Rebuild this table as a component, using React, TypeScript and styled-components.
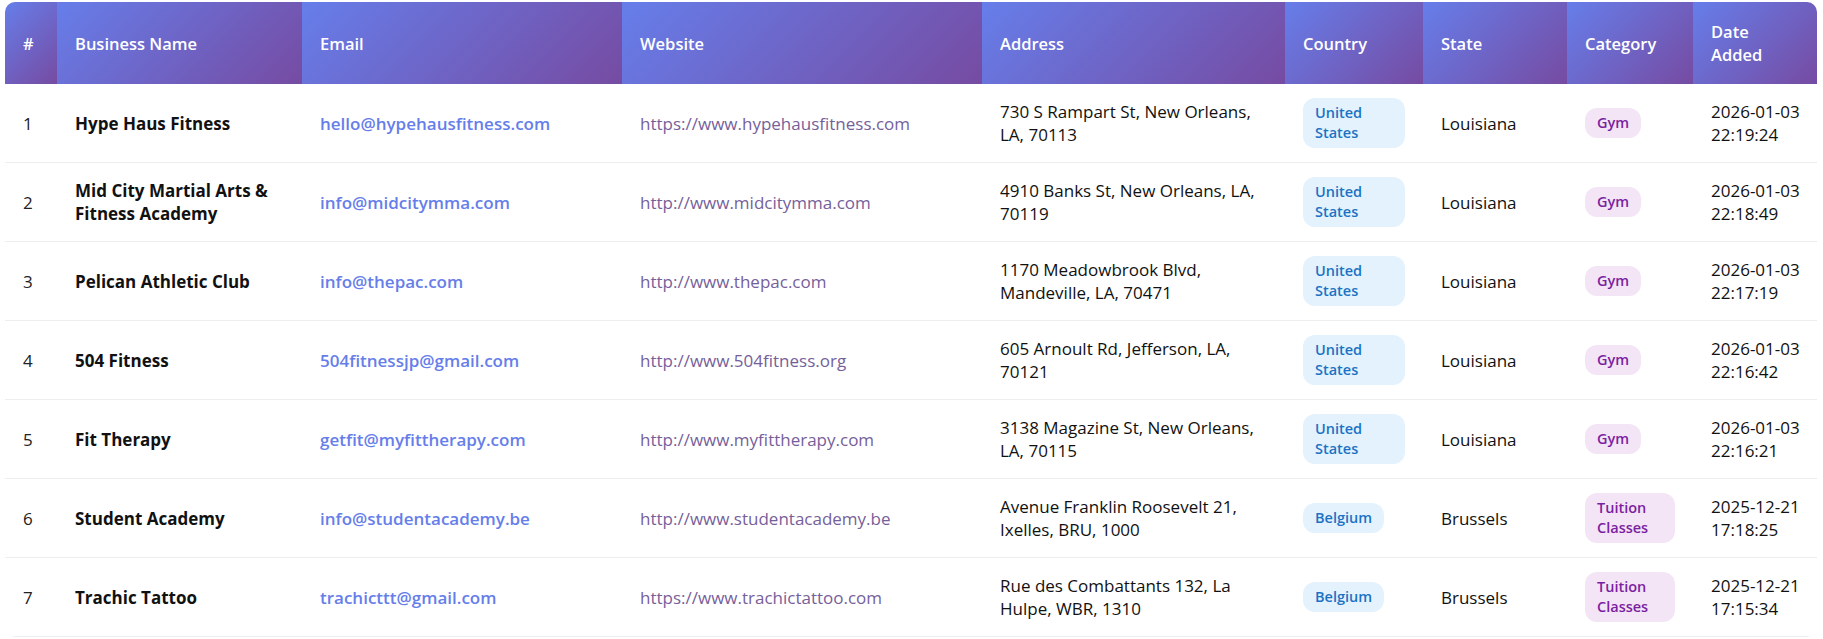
import React from "react";
import styled, { createGlobalStyle } from "styled-components";

const GlobalStyle = createGlobalStyle`
  html, body { margin: 0; padding: 0; background: #ffffff; }
  body { font-family: "Open Sans", "Noto Sans", "Liberation Sans", sans-serif; color: #222; }
`;

const Page = styled.div`
  padding: 2px 6px 0 5px;
`;

const Card = styled.div`
  border-radius: 10px;
  overflow: hidden;
  background: #fff;
`;

const Table = styled.table`
  width: 100%;
  border-collapse: collapse;
  table-layout: fixed;
  line-height: 23px;
`;

const Th = styled.th`
  background: linear-gradient(135deg, #667eea 0%, #764ba2 100%);
  color: #ffffff;
  font-size: 16.5px;
  font-weight: 600;
  text-align: left;
  padding: 18px 18px;
  vertical-align: middle;
`;

const Tr = styled.tr`
  border-bottom: 1px solid #eeeeee;
`;

const Td = styled.td<{ $tone?: "num" | "name" | "email" | "site" | "plain" }>`
  padding: 14px 18px;
  font-size: 17px;
  vertical-align: middle;
  color: ${(p) =>
    p.$tone === "email" ? "#667eea" : p.$tone === "site" ? "#76609a" : p.$tone === "num" ? "#222" : "#111"};
  font-weight: ${(p) => (p.$tone === "name" ? 700 : p.$tone === "email" ? 600 : 400)};
`;

const DateLine = styled.span`
  display: block;
  white-space: nowrap;
`;

const Badge = styled.span<{ $kind: "country" | "category" }>`
  display: inline-block;
  vertical-align: middle;
  padding: 5px 12px;
  border-radius: 12px;
  font-size: 14.5px;
  line-height: 20px;
  font-weight: 600;
  background: ${(p) => (p.$kind === "country" ? "#e3f2fd" : "#f3e5f5")};
  color: ${(p) => (p.$kind === "country" ? "#1c72c4" : "#7b1fa2")};
`;

type Row = {
  name: string;
  email: string;
  site: string;
  address: string;
  country: string;
  state: string;
  category: string;
  date: string;
  time: string;
};

const rows: Row[] = [
  { name: "Hype Haus Fitness", email: "hello@hypehausfitness.com", site: "https://www.hypehausfitness.com", address: "730 S Rampart St, New Orleans, LA, 70113", country: "United States", state: "Louisiana", category: "Gym", date: "2026-01-03", time: "22:19:24" },
  { name: "Mid City Martial Arts & Fitness Academy", email: "info@midcitymma.com", site: "http://www.midcitymma.com", address: "4910 Banks St, New Orleans, LA, 70119", country: "United States", state: "Louisiana", category: "Gym", date: "2026-01-03", time: "22:18:49" },
  { name: "Pelican Athletic Club", email: "info@thepac.com", site: "http://www.thepac.com", address: "1170 Meadowbrook Blvd, Mandeville, LA, 70471", country: "United States", state: "Louisiana", category: "Gym", date: "2026-01-03", time: "22:17:19" },
  { name: "504 Fitness", email: "504fitnessjp@gmail.com", site: "http://www.504fitness.org", address: "605 Arnoult Rd, Jefferson, LA, 70121", country: "United States", state: "Louisiana", category: "Gym", date: "2026-01-03", time: "22:16:42" },
  { name: "Fit Therapy", email: "getfit@myfittherapy.com", site: "http://www.myfittherapy.com", address: "3138 Magazine St, New Orleans, LA, 70115", country: "United States", state: "Louisiana", category: "Gym", date: "2026-01-03", time: "22:16:21" },
  { name: "Student Academy", email: "info@studentacademy.be", site: "http://www.studentacademy.be", address: "Avenue Franklin Roosevelt 21, Ixelles, BRU, 1000", country: "Belgium", state: "Brussels", category: "Tuition Classes", date: "2025-12-21", time: "17:18:25" },
  { name: "Trachic Tattoo", email: "trachicttt@gmail.com", site: "https://www.trachictattoo.com", address: "Rue des Combattants 132, La Hulpe, WBR, 1310", country: "Belgium", state: "Brussels", category: "Tuition Classes", date: "2025-12-21", time: "17:15:34" },
];

const widths = [52, 245, 320, 360, 303, 138, 144, 126, 124];
const headers = ["#", "Business Name", "Email", "Website", "Address", "Country", "State", "Category", "Date Added"];

export default function App() {
  return (
    <>
      <GlobalStyle />
      <Page>
        <Card>
          <Table>
            <colgroup>
              {widths.map((w, i) => (
                <col key={i} style={{ width: w }} />
              ))}
            </colgroup>
            <thead>
              <tr>
                {headers.map((h) => (
                  <Th key={h}>{h}</Th>
                ))}
              </tr>
            </thead>
            <tbody>
              {rows.map((r, i) => (
                <Tr key={r.name}>
                  <Td $tone="num">{i + 1}</Td>
                  <Td $tone="name">{r.name}</Td>
                  <Td $tone="email">{r.email}</Td>
                  <Td $tone="site">{r.site}</Td>
                  <Td $tone="plain">{r.address}</Td>
                  <Td $tone="plain">
                    <Badge $kind="country">{r.country}</Badge>
                  </Td>
                  <Td $tone="plain">{r.state}</Td>
                  <Td $tone="plain">
                    <Badge $kind="category">{r.category}</Badge>
                  </Td>
                  <Td $tone="plain">
                    <DateLine>{r.date}</DateLine>
                    <DateLine>{r.time}</DateLine>
                  </Td>
                </Tr>
              ))}
            </tbody>
          </Table>
        </Card>
      </Page>
    </>
  );
}
